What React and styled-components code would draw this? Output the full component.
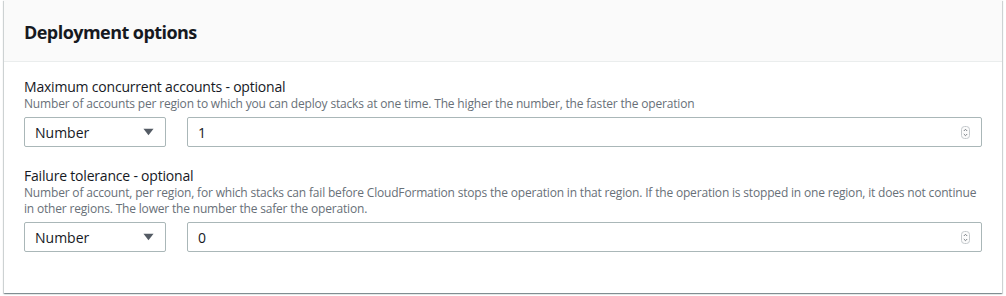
import React from 'react';
import styled, {createGlobalStyle} from 'styled-components';

const GlobalStyle = createGlobalStyle`
  html, body {
    margin: 0;
    padding: 0;
    background: #ffffff;
  }
  body {
    font-family: "Open Sans", "Liberation Sans", sans-serif;
    color: #16191f;
  }
`

const fields = [
  {
    id: 'max-accounts',
    label: 'Maximum concurrent accounts - optional',
    description: 'Number of accounts per region to which you can deploy stacks at one time. The higher the number, the faster the operation',
    type: 'Number',
    value: '1',
  },
  {
    id: 'failure-tolerance',
    label: 'Failure tolerance - optional',
    description: 'Number of account, per region, for which stacks can fail before CloudFormation stops the operation in that region. If the operation is stopped in one region, it does not continue in other regions. The lower the number the safer the operation.',
    type: 'Number',
    value: '0',
  },
];

function Spinner() {
  return (
    <SpinnerStyle viewBox="0 0 9 13" aria-hidden="true">
      <rect x="0.5" y="0.5" width="8" height="12" rx="3" fill="#fbfbfb" stroke="#c4c9cc" />
      <path d="M2.8 5 L4.5 3.3 L6.2 5" fill="none" stroke="#6b7278" strokeWidth="0.9" />
      <path d="M2.8 8 L4.5 9.7 L6.2 8" fill="none" stroke="#6b7278" strokeWidth="0.9" />
    </SpinnerStyle>
  );
}

function Field({label, description, type, value}) {
  return (
    <FieldStyle>
      <Label>{label}</Label>
      <Description>{description}</Description>
      <Controls>
        <Select>
          <span>{type}</span>
          <Caret viewBox="0 0 12 8" aria-hidden="true">
            <path d="M0.5 0.5 H11.5 L6 7.5 Z" fill="#545b64" />
          </Caret>
        </Select>
        <NumberInput>
          <span>{value}</span>
          <Spinner />
        </NumberInput>
      </Controls>
    </FieldStyle>
  );
}

export default function App() {
  return (
    <>
      <GlobalStyle />
      <Page>
        <Card>
          <Header>
            <h2>Deployment options</h2>
          </Header>
          <Body>
            {fields.map((f) => (
              <Field key={f.id} {...f} />
            ))}
          </Body>
        </Card>
      </Page>
    </>
  );
}

const Page = styled.div`
  padding: 0 4px 3px 4px;
`

const Card = styled.section`
  background: #ffffff;
  box-shadow: 0 1px 1px 0 rgba(0, 28, 36, 0.3), 1px 1px 1px 0 rgba(0, 28, 36, 0.15), -1px 1px 1px 0 rgba(0, 28, 36, 0.15);
`

const Header = styled.div`
  background: #fafafa;
  border-bottom: 1px solid #eaeded;
  padding: 21px 20px 18px 20px;
  h2 {
    margin: 0;
    font-size: 18px;
    line-height: 22px;
    font-weight: 700;
    letter-spacing: -0.55px;
    color: #16191f;
  }
`

const Body = styled.div`
  padding: 16px 20px 41px 20px;
  display: flex;
  flex-direction: column;
  gap: 20px;
`

const FieldStyle = styled.div`
  display: flex;
  flex-direction: column;
`

const Label = styled.label`
  font-size: 14px;
  line-height: 18px;
  letter-spacing: -0.2px;
  color: #16191f;
`

const Description = styled.div`
  font-size: 12px;
  line-height: 16px;
  letter-spacing: -0.18px;
  color: #687078;
  margin-bottom: 5px;
`

const Controls = styled.div`
  display: flex;
  gap: 21px;
`

const boxBase = `
  box-sizing: border-box;
  height: 30px;
  border: 1px solid #aab7b8;
  border-radius: 2px;
  background: #ffffff;
  display: flex;
  align-items: center;
  font-size: 14px;
  color: #16191f;
`

const Select = styled.div`
  ${boxBase}
  width: 142px;
  flex: none;
  padding: 0 10px 0 10px;
  justify-content: space-between;
`

const Caret = styled.svg`
  width: 11px;
  height: 8px;
  margin-right: 1px;
`

const NumberInput = styled.div`
  ${boxBase}
  flex: 1;
  padding: 0 11px 0 10px;
  justify-content: space-between;
`

const SpinnerStyle = styled.svg`
  width: 9px;
  height: 13px;
`
